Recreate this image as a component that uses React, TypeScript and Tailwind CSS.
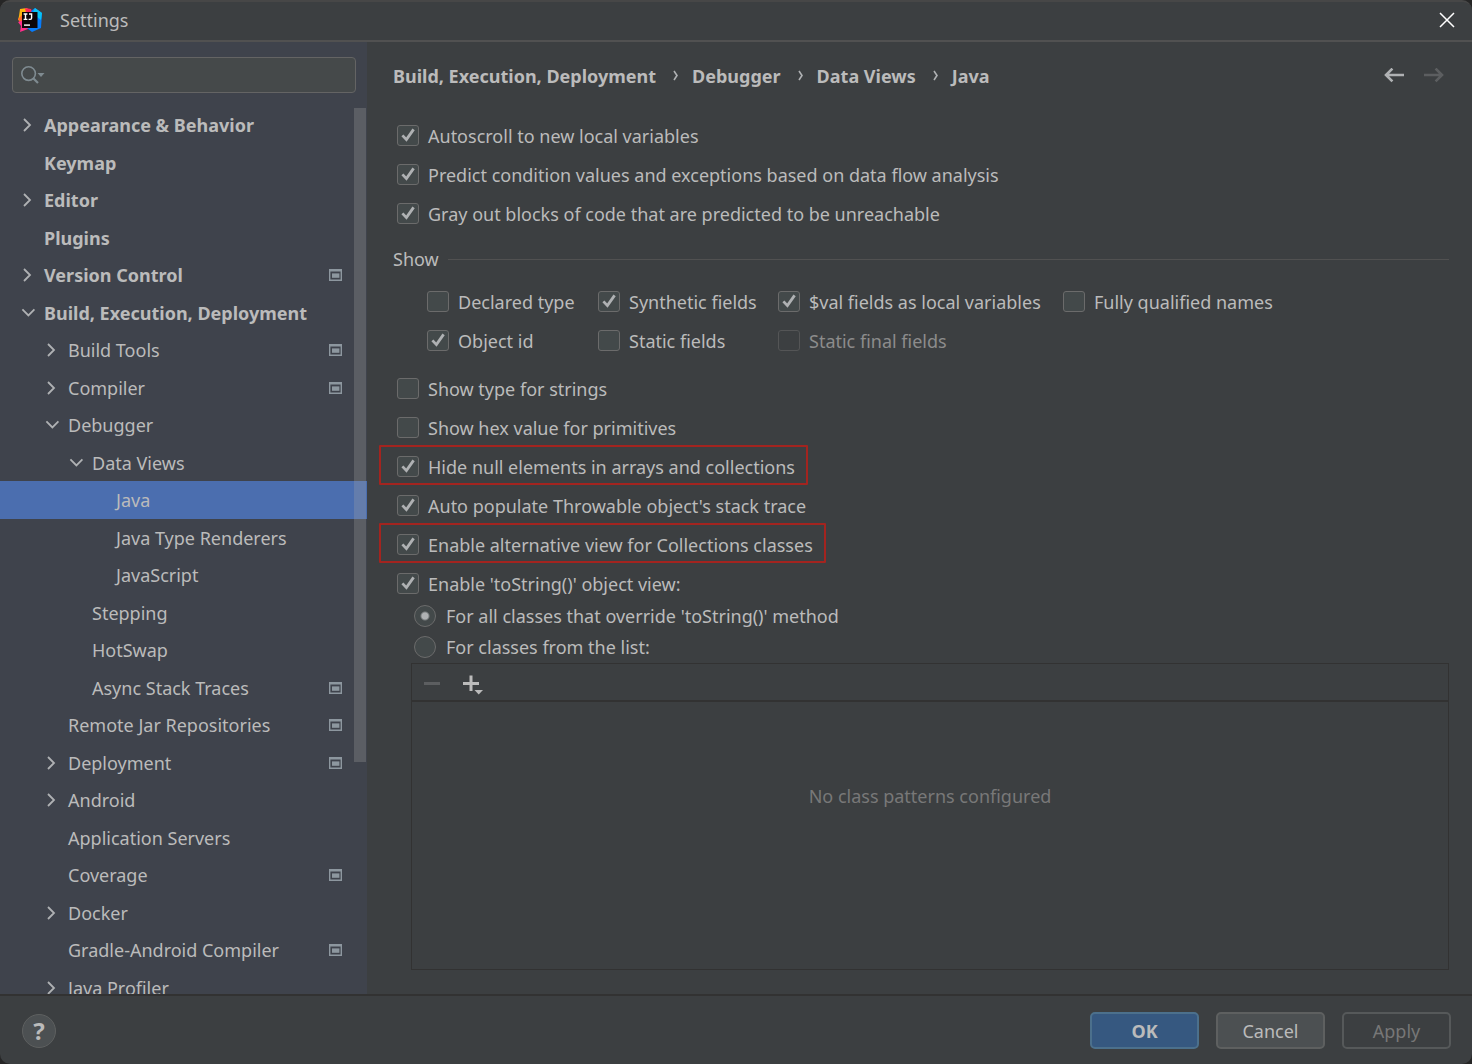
import React, { useState } from 'react';

interface TreeItem {
  label: string;
  level: number;
  state?: 'open' | 'closed';
  project?: boolean;
}

const treeItems: TreeItem[] = [
  { label: 'Appearance & Behavior', level: 0, state: 'closed' },
  { label: 'Keymap', level: 0 },
  { label: 'Editor', level: 0, state: 'closed' },
  { label: 'Plugins', level: 0 },
  { label: 'Version Control', level: 0, state: 'closed', project: true },
  { label: 'Build, Execution, Deployment', level: 0, state: 'open' },
  { label: 'Build Tools', level: 1, state: 'closed', project: true },
  { label: 'Compiler', level: 1, state: 'closed', project: true },
  { label: 'Debugger', level: 1, state: 'open' },
  { label: 'Data Views', level: 2, state: 'open' },
  { label: 'Java', level: 3 },
  { label: 'Java Type Renderers', level: 3 },
  { label: 'JavaScript', level: 3 },
  { label: 'Stepping', level: 2 },
  { label: 'HotSwap', level: 2 },
  { label: 'Async Stack Traces', level: 2, project: true },
  { label: 'Remote Jar Repositories', level: 1, project: true },
  { label: 'Deployment', level: 1, state: 'closed', project: true },
  { label: 'Android', level: 1, state: 'closed' },
  { label: 'Application Servers', level: 1 },
  { label: 'Coverage', level: 1, project: true },
  { label: 'Docker', level: 1, state: 'closed' },
  { label: 'Gradle-Android Compiler', level: 1, project: true },
  { label: 'Java Profiler', level: 1, state: 'closed' },
];

const indents = ['pl-[20px]', 'pl-[44px]', 'pl-[68px]', 'pl-[92px]'];

const breadcrumbs = ['Build, Execution, Deployment', 'Debugger', 'Data Views', 'Java'];

function IdeaLogo() {
  return (
    <svg className="w-6 h-6" viewBox="0 0 24 24" aria-hidden="true">
      <path d="M2 1 L9 0 L13 5 L6 14 L0 12 L1 8 Z" fill="#fdb60d" />
      <path d="M0 11 L6 5 L9 14 L4 18 Z" fill="#ff6a2b" />
      <path d="M7 0 L13 1 L15 6 L9 10 Z" fill="#fe2857" />
      <path d="M0 14 L6 12 L14 19 L10 21 L2 24 L3 18 Z" fill="#fe2d8b" />
      <path d="M13 3 L17 0 L24 5 L23 20 L14 24 L9 20 L17 12 Z" fill="#087cfa" />
      <path d="M17 0 L24 5 L23 12 L19 9 L15 4 Z" fill="#07c3f2" />
      <rect x="4" y="4" width="15.5" height="16" fill="#0c0508" />
      <rect x="6" y="16.4" width="6" height="1.4" fill="#fff" />
      <path d="M5.6 6 H9.4 M7.5 6 V11.4 M5.6 11.4 H9.4 M11 6 H13.6 V10 Q13.6 11.4 12.3 11.4 H10.6" fill="none" stroke="#fff" strokeWidth="1.4" />
    </svg>
  );
}

function Chevron({ open }: { open: boolean }) {
  return (
    <svg className="w-4 h-4" viewBox="0 0 16 16" fill="none" stroke="#afb1b3" strokeWidth="1.8" aria-hidden="true">
      <path d={open ? 'M2.4 4.4 L8.4 10.4 L14.4 4.4' : 'M4 2 L10 8 L4 14'} />
    </svg>
  );
}

function ProjectIcon() {
  return (
    <svg className="w-[13px] h-3" viewBox="0 0 13 12" aria-hidden="true">
      <path d="M0 0H13V12H0Z M1.4 2.6V10.6H11.6V2.6Z" fill="#8d979f" fillRule="evenodd" />
      <rect x="3" y="4.4" width="7.4" height="4.4" fill="#8d979f" />
    </svg>
  );
}

function Arrow({ forward }: { forward?: boolean }) {
  return (
    <svg className="w-5 h-4" viewBox="0 0 20 16" fill="none" stroke={forward ? '#5c5e60' : '#afb1b3'} strokeWidth="2.6" aria-hidden="true">
      <path d={forward ? 'M0 7 H18 M11.6 0.6 L18 7 L11.6 13.4' : 'M20 7 H2 M8.4 0.6 L2 7 L8.4 13.4'} />
    </svg>
  );
}

interface CheckProps {
  label: string;
  checked?: boolean;
  disabled?: boolean;
  marked?: boolean;
}

function Check({ label, checked = false, disabled, marked }: CheckProps) {
  const [on, setOn] = useState(checked);

  return (
    <label className={`relative flex items-center gap-[9px] h-[30px] w-fit whitespace-nowrap ${disabled ? 'text-[#8c8c8c]' : ''}`}>
      <span className="grid pb-px">
        <input
          type="checkbox"
          checked={on}
          disabled={disabled}
          onChange={() => setOn(!on)}
          className="col-start-1 row-start-1 appearance-none w-[22px] h-[21px] rounded-[3px] border border-[#6b6b6b] bg-[#43494a] disabled:border-[#545556] disabled:bg-[#3c3f41]"
        />
        {on && (
          <svg className="col-start-1 row-start-1 w-[22px] h-[21px] pointer-events-none" viewBox="0 0 22 21" fill="none" stroke="#afb1b3" strokeWidth="2.8" aria-hidden="true">
            <path d="M5.4 10.4 L9.4 14.6 L16.6 4.4" />
          </svg>
        )}
      </span>
      {label}
      {marked && (
        <span className="absolute -top-[7px] -bottom-[3px] -left-[18px] -right-[13px] border-2 border-[#a3241f] rounded-[1px] pointer-events-none" />
      )}
    </label>
  );
}

function Radio({ label, checked }: { label: string; checked?: boolean }) {
  return (
    <label className="flex items-center gap-[10px] h-[31px] w-fit">
      <input
        type="radio"
        name="to-string"
        defaultChecked={checked}
        className="appearance-none w-[22px] h-[22px] rounded-full border border-[#6b6b6b] bg-[#43494a] bg-[radial-gradient(circle,#afb1b3_3px,transparent_5px)] not-checked:bg-none"
      />
      {label}
    </label>
  );
}

function Sidebar() {
  const [selected, setSelected] = useState('Java');

  return (
    <aside className="w-[367px] shrink-0 flex flex-col bg-[#3f434c]">
      <div className="pt-[15px] pb-[13px] pl-3 pr-[11px]">
        <label className="flex items-center h-9 px-[8px] rounded-[4px] border border-[#646464] bg-[#45494a]">
          <svg className="w-6 h-5" viewBox="0 0 24 20" fill="none" aria-hidden="true">
            <circle cx="7.6" cy="8.6" r="6.8" stroke="#7f8b91" strokeWidth="1.6" />
            <path d="M12 13 L17 18" stroke="#7f8b91" strokeWidth="2.2" />
            <path d="M16.5 8 H23.5 L20 12 Z" fill="#7f8b91" />
          </svg>
          <input type="text" aria-label="Search settings" className="flex-1 min-w-0 px-1 bg-transparent outline-none" />
        </label>
      </div>
      <div className="relative flex-1 min-h-0">
        <ul className="h-full overflow-hidden">
          {treeItems.map(item => (
            <li key={item.label} className="h-[38px] even:h-[37px]">
              <button
                onClick={() => setSelected(item.label)}
                className={`w-full h-full flex items-center pr-[25px] text-left ${indents[item.level]} ${item.level === 0 ? 'font-bold' : ''} ${selected === item.label ? 'bg-[#4b6eaf]' : ''}`}
              >
                <span className="w-6 shrink-0">
                  {item.state && <Chevron open={item.state === 'open'} />}
                </span>
                <span className="flex-1 whitespace-nowrap">{item.label}</span>
                {item.project && <ProjectIcon />}
              </button>
            </li>
          ))}
        </ul>
        {/* Scrollbar thumb */}
        <div className="absolute top-[2px] right-[1px] w-3 h-[654px] bg-[#a6a6a6]/28" />
      </div>
    </aside>
  );
}

export default function App() {
  return (
    <div className="h-screen bg-[#262626]">
      <div className="h-full flex flex-col overflow-hidden rounded-[10px] border-t-2 border-[#474747] bg-[#3c3f41] text-[#bbbbbb] text-[18px] leading-6 font-['Noto_Sans','Open_Sans',sans-serif]">
        {/* Title bar */}
        <header className="shrink-0 h-10 flex items-center border-b-2 border-[#515151] pb-[2px] pl-[18px] pr-[17px]">
          <IdeaLogo />
          <h1 className="flex-1 pl-[18px]">Settings</h1>
          <button aria-label="Close">
            <svg className="w-4 h-4" viewBox="0 0 16 16" stroke="#fff" strokeWidth="1.5" aria-hidden="true">
              <path d="M1 1 L15 15 M15 1 L1 15" />
            </svg>
          </button>
        </header>

        <div className="flex-1 min-h-0 flex">
          <Sidebar />

          <main className="flex-1 min-w-0 flex flex-col pl-[26px] pr-[23px] pb-6">
            <div className="h-[68px] flex items-center">
              <nav className="flex-1 flex items-center font-bold" aria-label="Breadcrumb">
                {breadcrumbs.map((crumb, i) => (
                  <React.Fragment key={crumb}>
                    {i > 0 && (
                      <svg className="w-9 h-3" viewBox="0 0 36 12" fill="none" stroke="#afb1b3" strokeWidth="1.6" aria-hidden="true">
                        <path d="M18 1 L21 5.5 L18 10" />
                      </svg>
                    )}
                    <a href="#">{crumb}</a>
                  </React.Fragment>
                ))}
              </nav>
              <div className="flex gap-5 pr-[5px]">
                <button aria-label="Back"><Arrow /></button>
                <button aria-label="Forward" disabled><Arrow forward /></button>
              </div>
            </div>

            <div className="flex flex-col gap-[9px] pt-[11px] pl-[4px]">
              <Check label="Autoscroll to new local variables" checked />
              <Check label="Predict condition values and exceptions based on data flow analysis" checked />
              <Check label="Gray out blocks of code that are predicted to be unreachable" checked />
            </div>

            <section>
              <div className="flex items-center gap-[9px] h-[46px] mt-[7px]">
                <h2>Show</h2>
                <div className="flex-1 h-px bg-[#515151]" />
              </div>
              <div className="grid grid-cols-[171px_180px_285px_auto] gap-y-[9px] pt-[5px] pl-[34px]">
                <Check label="Declared type" />
                <Check label="Synthetic fields" checked />
                <Check label="$val fields as local variables" checked />
                <Check label="Fully qualified names" />
                <Check label="Object id" checked />
                <Check label="Static fields" />
                <Check label="Static final fields" disabled />
              </div>
            </section>

            <div className="flex flex-col gap-[9px] pt-[18px] pl-[4px]">
              <Check label="Show type for strings" />
              <Check label="Show hex value for primitives" />
              <Check label="Hide null elements in arrays and collections" checked marked />
              <Check label="Auto populate Throwable object's stack trace" checked />
              <Check label="Enable alternative view for Collections classes" checked marked />
              <Check label="Enable 'toString()' object view:" checked />
            </div>

            <div className="pt-px pb-px pl-[21px]">
              <Radio label="For all classes that override 'toString()' method" checked />
              <Radio label="For classes from the list:" />
            </div>

            <div className="flex-1 ml-[18px] flex flex-col border border-[#323232]">
              <div className="h-[38px] flex items-center gap-[22px] pt-px pl-3 border-b-2 border-[#323232]">
                <button aria-label="Remove" disabled>
                  <svg className="w-4 h-5" viewBox="0 0 16 20" aria-hidden="true">
                    <path d="M0 9 H16 V12 H0 Z" fill="#5c5e60" />
                  </svg>
                </button>
                <button aria-label="Add">
                  <svg className="w-5 h-5 overflow-visible" viewBox="0 0 20 20" fill="#bbbbbb" aria-hidden="true">
                    <path d="M7.5 2.5 H10.5 V9 H17 V12 H10.5 V18 H7.5 V12 H1 V9 H7.5 Z" />
                    <path d="M12.5 17 H21 L16.7 21.4 Z" />
                  </svg>
                </button>
              </div>
              <div className="flex-1 flex flex-col items-center pt-px text-[#787878]">
                <div className="flex-1" />
                <p>No class patterns configured</p>
                <div className="flex-[2]" />
              </div>
            </div>
          </main>
        </div>

        {/* Dialog buttons */}
        <footer className="shrink-0 h-[70px] flex items-center gap-[17px] border-t-2 border-[#323232] pt-px pl-[22px] pr-[21px]">
          <button aria-label="Help" className="w-[34px] h-[34px] rounded-full border border-[#5e6060] bg-[#4c5052] text-[24px] font-bold">?</button>
          <div className="flex-1" />
          <button className="w-[109px] h-[37px] rounded-[5px] border-2 border-[#4c708c] bg-[#365880] font-bold">OK</button>
          <button className="w-[109px] h-[37px] rounded-[5px] border-2 border-[#5e6060] bg-[#4c5052]">Cancel</button>
          <button disabled className="w-[109px] h-[37px] rounded-[5px] border-2 border-[#56595a] text-[#777777]">Apply</button>
        </footer>
      </div>
    </div>
  );
}
